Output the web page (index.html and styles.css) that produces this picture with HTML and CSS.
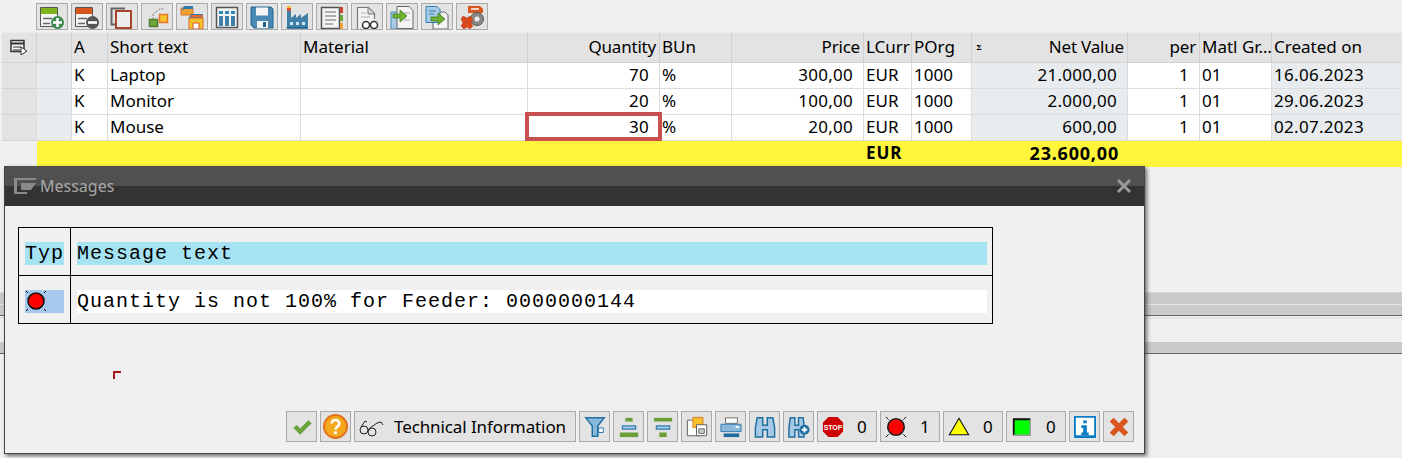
FILE: index.html
```html
<!DOCTYPE html>
<html lang="en">
<head>
<meta charset="utf-8">
<title>Messages</title>
<link rel="stylesheet" href="styles.css">
</head>
<body>
<div class="page">
  <div class="toolbar">
    <button class="tb"><svg class="ic" viewBox="0 0 24 24"><path d="M.5 2.500h17v19H.5z" fill="#f4f4f4" stroke="#555"/><path d="M1 3h16v6H1z" fill="#7fb41b"/><path d="M3 13.500h9M3 18.500h7" stroke="#666" stroke-width="1.500"/><circle cx="17.500" cy="17.500" r="6.500" fill="#3d8a4e"/><path d="M17.500 13v9M13 17.500h9" stroke="#fff" stroke-width="2.600"/></svg></button>
    <button class="tb"><svg class="ic" viewBox="0 0 24 24"><path d="M.5 2.500h17v19H.5z" fill="#f4f4f4" stroke="#555"/><path d="M1 3h16v6H1z" fill="#d8561c"/><path d="M3 13.500h9M3 18.500h7" stroke="#666" stroke-width="1.500"/><circle cx="17.500" cy="17.500" r="6.500" fill="#555"/><path d="M13 17.500h9" stroke="#fff" stroke-width="2.600"/></svg></button>
    <button class="tb"><svg class="ic" viewBox="0 0 24 24"><path d="M15 3.500H1.500v16H5" fill="none" stroke="#666" stroke-width="2"/><path d="M6 6h15v17H6z" fill="#eee" stroke="#a8452c" stroke-width="2"/></svg></button>
    <button class="tb"><svg class="ic" viewBox="0 0 24 24"><path d="M8 14V9l7-5h4" fill="none" stroke="#888" stroke-dasharray="2 1"/><path d="M4.500 14.500h8v7h-8z" fill="#6fa83a" stroke="#4d7f2c" stroke-width="1.500"/><path d="M14.500 9.500h8v8h-8z" fill="#f9c52c" stroke="#e8762a" stroke-width="1.500"/></svg></button>
    <button class="tb"><svg class="ic" viewBox="0 0 24 24"><path d="M1 3h12v7H1z" fill="#f0a030" stroke="#d8762a"/><path d="M1 6l3-5h9v3H4z" fill="#2f7cb0"/><path d="M8 14l3-5h12v4H8z" fill="#2f7cb0"/><path d="M9 13h14v11H9z" fill="#f6c02c" stroke="#e0662a"/><path d="M13 18h6v6h-6z" fill="#fff" stroke="#d8562a"/><path d="M11 11h12" stroke="#e0662a" stroke-width="2"/></svg></button>
    <button class="tb"><svg class="ic" viewBox="0 0 24 24"><path d="M1.500 2.500h21v20h-21z" fill="#f4f4f4" stroke="#555" stroke-width="1.500"/><path d="M4 6h4v3H4zM10 6h4v3h-4zM16 6h4v3h-4z" fill="#2f86b8"/><path d="M4 11h4v10H4zM10 11h4v10h-4zM16 11h4v10h-4z" fill="#3f7fa8"/></svg></button>
    <button class="tb"><svg class="ic" viewBox="0 0 24 24"><path d="M1 2h20l2 2v19H4l-3-3z" fill="#4b89b5" stroke="#1f6590" stroke-width="1"/><path d="M6 2.500h12v8H6z" fill="#f4f4f4"/><path d="M7 16h11v7H7z" fill="#f4f4f4"/><path d="M13 17h3v5h-3z" fill="#1f6590"/></svg></button>
    <button class="tb"><svg class="ic" viewBox="0 0 24 24"><path d="M2 1h4v12l5-4v4l5-4v4l7-5v16H2z" fill="#3f7fa8"/><path d="M2 3h4v3H2z" fill="#e04a30"/><path d="M2 1h4v2H2z" fill="#f2c030"/><path d="M5 17h3v3H5zM11 17h3v3h-3zM17 17h3v3h-3z" fill="#cfe5f2"/><path d="M1.500 22.500h21" stroke="#1f6590"/></svg></button>
    <button class="tb"><svg class="ic" viewBox="0 0 24 24"><path d="M1.500 2.500h18v21h-18z" fill="#f4f4f4" stroke="#555" stroke-width="1.500"/><path d="M5 7h11M5 11h11M5 15h11M5 19h8" stroke="#999" stroke-width="1.500"/><path d="M20 2h3v6h-3z" fill="#d04030"/><path d="M20 10h3v6h-3z" fill="#6fa83a"/><path d="M20 18h3v6h-3z" fill="#f0a030"/></svg></button>
    <button class="tb"><svg class="ic" viewBox="0 0 24 24"><path d="M2.500 24V2.500h11l6 6V14" fill="#f4f4f4" stroke="#777" stroke-width="1.200"/><path d="M13 3v6h6" fill="#ddd" stroke="#777"/><path d="M6 8h5M6 12h9" stroke="#aaa"/><circle cx="11" cy="20" r="3.500" fill="#fff" stroke="#333" stroke-width="1.500"/><circle cx="19" cy="20" r="3.500" fill="#fff" stroke="#333" stroke-width="1.500"/><path d="M14 19h2" stroke="#333" stroke-width="1.500"/></svg></button>
    <button class="tb"><svg class="ic" viewBox="0 0 24 24"><path d="M1 7h8v17H1z" fill="#a8cce6" stroke="#4b89b5"/><path d="M7 1.500h12l4 4v18H7z" fill="#f4f4f4" stroke="#666"/><path d="M14 8h6M14 15h6" stroke="#aaa"/><path d="M3 9h7V5l7 6-7 6v-4H3z" fill="#6fb02c" stroke="#3f7f2c" stroke-width=".8"/></svg></button>
    <button class="tb"><svg class="ic" viewBox="0 0 24 24"><path d="M11 7h9l3 3v14H8V10z" fill="#f4f4f4" stroke="#666"/><path d="M1 1.500h11l3 3v13H1z" fill="#a8cce6" stroke="#2f7cb0"/><path d="M4 6h7M4 9h5" stroke="#2f7cb0"/><path d="M6 12h7V8l7 6-7 6v-4H6z" fill="#6fb02c" stroke="#3f7f2c" stroke-width=".8"/></svg></button>
    <button class="tb"><svg class="ic" viewBox="0 0 24 24"><path d="M8 1h12l3 3v4H8z" fill="#d8561c"/><path d="M11 4h8" stroke="#fff" stroke-width="1.500"/><circle cx="17" cy="14" r="6.500" fill="#888" stroke="#555"/><circle cx="17" cy="14" r="2.500" fill="#eee"/><path d="M3 11l4 2 3-2 3 3-2 4 2 3-3 3-3-2-3 2-3-3 2-3-2-4z" fill="#d8481c" stroke="#b83818" stroke-width=".5"/></svg></button>
  </div>

  <div class="grid-table">
    <div class="row head">
      <div class="c sel"><svg class="sel-ic" viewBox="0 0 18 16"><path d="M1 1.500h13v11H1z" fill="#f4f4f4" stroke="#333" stroke-width="1.500"/><path d="M1 4.500h13" stroke="#333" stroke-width="2"/><path d="M3 8h8M3 11h7" stroke="#333"/><path d="M11 8l6 4-6 4z" fill="#fff" stroke="#333"/></svg></div>
      <div class="c"></div><div class="c">A</div><div class="c">Short text</div><div class="c">Material</div>
      <div class="c r">Quantity</div><div class="c">BUn</div><div class="c r">Price</div><div class="c">LCurr</div><div class="c">POrg</div>
      <div class="c r sum"><span class="sigma">Σ</span>Net Value</div><div class="c r">per</div><div class="c">Matl Gr…</div><div class="c">Created on</div>
    </div>
    <div class="row">
      <div class="c sel"></div><div class="c shade"></div><div class="c">K</div><div class="c">Laptop</div><div class="c"></div>
      <div class="c n">70</div><div class="c">%</div><div class="c n">300,00</div><div class="c">EUR</div><div class="c">1000</div>
      <div class="c n shade">21.000,00</div><div class="c n">1</div><div class="c">01</div><div class="c shade date">16.06.2023</div>
    </div>
    <div class="row">
      <div class="c sel"></div><div class="c shade"></div><div class="c">K</div><div class="c">Monitor</div><div class="c"></div>
      <div class="c n">20</div><div class="c">%</div><div class="c n">100,00</div><div class="c">EUR</div><div class="c">1000</div>
      <div class="c n shade">2.000,00</div><div class="c n">1</div><div class="c">01</div><div class="c shade date">29.06.2023</div>
    </div>
    <div class="row">
      <div class="c sel"></div><div class="c shade"></div><div class="c">K</div><div class="c">Mouse</div><div class="c"></div>
      <div class="c n current">30<span class="focus"></span></div><div class="c">%</div><div class="c n">20,00</div><div class="c">EUR</div><div class="c">1000</div>
      <div class="c n shade">600,00</div><div class="c n">1</div><div class="c">01</div><div class="c shade date">02.07.2023</div>
    </div>
    <div class="row total">
      <div class="c sel"></div><div class="c y first"></div><div class="c y"></div><div class="c y"></div><div class="c y"></div>
      <div class="c y"></div><div class="c y"></div><div class="c y"></div><div class="c y b cur">EUR</div><div class="c y"></div>
      <div class="c y b tot">23.600,00</div><div class="c y"></div><div class="c y"></div><div class="c y"></div>
    </div>
  </div>

  <div class="splitter"><div class="band"></div><div class="band"></div></div>
  <div class="stripe"></div>
  <div class="subbar"></div>
</div>

<section class="dialog">
  <header class="titlebar">
    <svg class="title-ic" viewBox="0 0 22 16"><path d="M0 0h22v2H0zM0 2h3v14H0zM3 14h10v2H3z" fill="#8a8a8a"/><path d="M7 5h15l-5 7H7z" fill="#8a8a8a"/></svg>
    <span class="title">Messages</span>
    <svg class="close" viewBox="0 0 16 16"><path d="M2 2l12 12M14 2L2 14" stroke="#9a9a9a" stroke-width="3"/></svg>
  </header>
  <div class="body">
    <div class="msg">
      <div class="mrow">
        <div class="mc typ"><span class="hl">Typ</span></div>
        <div class="mc txt"><span class="hl">Message text</span></div>
      </div>
      <div class="mrow last">
        <div class="mc typ"><span class="hl lamp"><svg class="lamp-ic" viewBox="0 0 22 22"><path d="M1 1l2 2M21 1l-2 2M1 21l2-2M21 21l-2-2" stroke="#000"/><circle cx="11" cy="11" r="8" fill="#f00" stroke="#111" stroke-width="1.600"/></svg></span></div>
        <div class="mc txt"><span class="hl white">Quantity is not 100% for Feeder: 0000000144</span></div>
      </div>
    </div>
    <svg class="corner" viewBox="0 0 8 8"><path d="M0 0h8v2H2v6H0z" fill="#a01818"/></svg>
  </div>
  <footer class="actions">
    <button class="ab"><svg class="ai" viewBox="0 0 24 24"><path d="M3 13l3-3 4 4 9-9 3 3-12 12z" fill="#6aa53a" stroke="#4f8a2c" stroke-width=".6"/></svg></button>
    <button class="ab"><svg class="ai big" viewBox="0 0 26 26"><circle cx="13" cy="13" r="12" fill="#f6a81c" stroke="#e2701c" stroke-width="2"/><path d="M9 10c0-5 8-5 8 0 0 3-4 3-4 6" fill="none" stroke="#fff" stroke-width="2.800"/><path d="M11.500 18h3v3h-3z" fill="#fff"/></svg></button>
    <button class="ab wide"><svg class="ai tech" viewBox="0 0 26 20"><circle cx="6" cy="13" r="4" fill="none" stroke="#222"/><circle cx="14" cy="15" r="4" fill="none" stroke="#222"/><path d="M10 12l2 1M3 10l4-6 2 1M12 11l7-5 4-1 2 3" fill="none" stroke="#222"/></svg><span class="tech-label">Technical Information</span></button>
    <button class="ab"><svg class="ai" viewBox="0 0 24 24"><path d="M2 2h20l-7 9v11H9V11z" fill="#8ab8da" stroke="#1f6ea0" stroke-width="1.600"/><path d="M16 13h5v5h-5z" fill="#fff" stroke="#1f6ea0"/></svg></button>
    <button class="ab"><svg class="ai" viewBox="0 0 24 24"><path d="M8 2h8v4H8z" fill="#6c9e3a"/><path d="M4.800 10.800h14.400v3.400H4.800z" fill="#a8cce6" stroke="#2f7cb0" stroke-width="1.400"/><path d="M2 18h20v5H2z" fill="#6c9e3a"/></svg></button>
    <button class="ab"><svg class="ai" viewBox="0 0 24 24"><path d="M2 2h20v4H2z" fill="#6c9e3a"/><path d="M4.800 10.800h14.400v3.400H4.800z" fill="#a8cce6" stroke="#2f7cb0" stroke-width="1.400"/><path d="M8 18h8v5H8z" fill="#6c9e3a"/></svg></button>
    <button class="ab"><svg class="ai" viewBox="0 0 24 24"><path d="M1.500 4.500h14v17h-14z" fill="#fff" stroke="#555"/><path d="M7.500 1.500h11v11h-11z" fill="#f6c02c" stroke="#e0761c"/><path d="M11.500 9.500h11v12h-11z" fill="#fff" stroke="#555"/><path d="M14 14h6v5h-6z" fill="#ccc" stroke="#666"/></svg></button>
    <button class="ab"><svg class="ai" viewBox="0 0 24 24"><path d="M6 2h13v6H6z" fill="#fff" stroke="#666"/><path d="M1 9h22v8H1z" fill="#8ab8da" stroke="#2f7cb0"/><path d="M17 11h4v2h-4z" fill="#fff"/><path d="M4 19h17v4H4z" fill="#1f6ea0"/></svg></button>
    <button class="ab"><svg class="ai" viewBox="0 0 24 24"><path d="M3.500 2h6v8h5V2h6l2 11v10h-8v-8h-5v8H1.500V13z" fill="#a5c8e4" stroke="#1f6ea0" stroke-width="1.600"/></svg></button>
    <button class="ab"><svg class="ai" viewBox="0 0 24 24"><path d="M2.500 2h5v8h4V2h5l1 8v13h-6v-8h-4v8H1V13z" fill="#a5c8e4" stroke="#1f6ea0" stroke-width="1.600"/><circle cx="18" cy="15" r="5.500" fill="#1f6ea0"/><path d="M18 12v6M15 15h6" stroke="#fff" stroke-width="2"/></svg></button>
    <button class="ab cnt"><svg class="ai" viewBox="0 0 24 24"><path d="M7 1h10l6 6v10l-6 6H7l-6-6V7z" fill="#cc0000"/><text x="12" y="15" class="stop">STOP</text></svg><span class="num">0</span></button>
    <button class="ab cnt"><svg class="ai" viewBox="0 0 24 24"><path d="M1 1l3 3M23 1l-3 3M1 23l3-3M23 23l-3-3" stroke="#000"/><circle cx="12" cy="12" r="9" fill="#f00" stroke="#222" stroke-width="1.800"/></svg><span class="num">1</span></button>
    <button class="ab cnt"><svg class="ai" viewBox="0 0 24 24"><path d="M12 2.500l10.500 18H1.500z" fill="#ff0" stroke="#111" stroke-width="1.200"/></svg><span class="num">0</span></button>
    <button class="ab cnt"><svg class="ai" viewBox="0 0 24 24"><path d="M3 3h18v18H3z" fill="#0f0"/><path d="M3 21V3.500h18" fill="none" stroke="#111" stroke-width="2"/><path d="M3 21h18V4" fill="none" stroke="#999" stroke-width="1.500"/></svg><span class="num">0</span></button>
    <button class="ab"><svg class="ai" viewBox="0 0 24 24"><path d="M1 1h22v22H1z" fill="#fff" stroke="#0a7cc4" stroke-width="2"/><path d="M10 5h4v3h-4zM8 10h6v8h2v3H8v-3h2v-5H8z" fill="#0a7cc4"/><path d="M1 21h22v2H1z" fill="#0a7cc4"/></svg></button>
    <button class="ab"><svg class="ai" viewBox="0 0 24 24"><path d="M4 4l16 16M20 4L4 20" stroke="#d9561e" stroke-width="6"/></svg></button>
  </footer>
</section>
</body>
</html>
```

FILE: styles.css
```css
* { box-sizing: border-box; }
html, body { margin: 0; height: 100%; }
body {
  background: #f0f0f0;
  overflow: hidden;
  font-family: "Noto Sans", "Liberation Sans", sans-serif;
  font-size: 17px;
  color: #000;
  position: relative;
  width: 1402px;
  height: 458px;
}
button { font: inherit; color: inherit; padding: 0; margin: 0; }
.toolbar {
  height: 32px;
  display: flex;
  gap: 3px;
  padding: 3px 0 0 36px;
}
.tb {
  width: 32px;
  height: 27px;
  background: #e3e3e3;
  border: 1px solid #aaa;
  border-radius: 0;
  display: flex;
  align-items: center;
  justify-content: center;
}
.ic { width: 24px; height: 24px; display: block; }

.row {
  display: grid;
  grid-template-columns: 36px 35px 36px 193px 227px 132px 72px 132px 48px 60px 156px 72px 72px 131px;
  height: 26px;
}
.row.head { height: 31px; }
.c {
  background: #fff;
  border-left: 1px solid #dcdcdc;
  border-bottom: 1px solid #dcdcdc;
  padding: 0 3px 0 2px;
  line-height: 23px;
  white-space: nowrap;
  overflow: hidden;
}
.head .c {
  background: #e3e3e3;
  border-left: 1px solid #d2d2d2;
  border-bottom: 1px solid #d2d2d2;
  border-top: 1px solid #ececec;
  line-height: 28px;
}
.c.r { text-align: right; letter-spacing: -.2px; }
.c.n { text-align: right; padding-right: 10px; letter-spacing: .25px; }
.c.date { letter-spacing: .3px; }
.c.shade { background: #e8ecef; }
.c.sel, .head .c.sel {
  background: #e3e3e3;
  margin-left: 2px;
  padding: 0;
  border-left: 0;
  border-bottom: 1px solid #d2d2d2;
}
.sel-ic { width: 18px; height: 16px; display: block; margin: 6px 0 0 8px; }
.sigma { font-family: "DejaVu Serif", serif; font-size: 8px; font-weight: 700; float: left; margin-left: 2px; }
.c.current { overflow: visible; position: relative; }
.focus {
  position: absolute;
  left: -3px; right: -3px; top: -3px; bottom: -1px;
  border: 4px solid #c85050;
}
.total .c { border: 0; line-height: 24px; }
.total .c.sel { background: #f0f0f0; }
.total .c.first { margin-left: 1px; }
.c.y { background: #fff53a; }
.c.b { font-weight: 700; }
.c.cur { padding-left: 3px; letter-spacing: 1px; }
.c.tot { text-align: right; padding-right: 8px; font-size: 18px; letter-spacing: .8px; }

.splitter { margin-top: 125px; }
.band { height: 12px; background: #cacaca; border-top: 1px solid #d8d8d8; }
.band + .band { border-top: 1px solid #e4e4e4; border-bottom: 1px solid #666; height: 12px; }
.stripe { height: 2px; margin-top: 1px; background: #e4e4e4; }
.subbar { margin-top: 23px; height: 12px; background: #cacaca; border-bottom: 1px solid #666; }

.dialog {
  position: absolute;
  left: 4px; top: 166px;
  width: 1141px; height: 288px;
  background: #f0f0f0;
  border: 1px solid #444;
  border-top: 0;
  box-shadow: 2px 2px 4px rgba(0,0,0,.55);
  display: flex;
  flex-direction: column;
}
.titlebar {
  height: 40px;
  flex: none;
  background: linear-gradient(#505050 0, #505050 50%, #333 50%, #333 100%);
  display: flex;
  align-items: center;
  padding: 0 12px 0 9px;
  color: #a8a8a8;
  font-size: 16px;
}
.title-ic { width: 22px; height: 16px; display: block; margin-right: 4px; }
.title { flex: 1; }
.close { width: 16px; height: 16px; display: block; }
.body { flex: 1; padding: 21px 0 0 13px; position: relative; }
.msg { width: 975px; border: 1px solid #000; }
.mrow { display: flex; height: 48px; border-bottom: 1px solid #000; }
.mrow.last { border-bottom: 0; height: 47px; }
.mc { display: flex; align-items: center; padding-top: 4px; font-family: "Liberation Mono", monospace; font-size: 20px; letter-spacing: 1px; }
.mc.typ { width: 52px; flex: none; border-right: 1px solid #000; padding-left: 6px; }
.mc.txt { flex: 1; padding-left: 6px; padding-right: 5px; }
.hl { background: #a5e3f3; height: 23px; line-height: 23px; display: block; flex: 1; white-space: pre; }
.typ .hl { margin-right: 6px; }
.hl.lamp { background: #a5c8ec; }
.hl.white { background: #fff; }
.lamp-ic { width: 22px; height: 22px; display: block; }
.corner { position: absolute; left: 108px; top: 165px; width: 8px; height: 8px; }
.actions {
  flex: none;
  display: flex;
  justify-content: flex-end;
  gap: 3px;
  padding: 0 10px 11px 0;
}
.ab {
  min-width: 31px;
  height: 31px;
  background: #e3e3e3;
  border: 1px solid #aaa;
  border-radius: 0;
  display: flex;
  align-items: center;
  justify-content: center;
  white-space: nowrap;
}
.ai { width: 22px; height: 22px; display: block; flex: none; }
.ai.big { width: 25px; height: 25px; }
.ai.tech { width: 26px; height: 20px; }
.ab.wide { width: 222px; justify-content: flex-start; padding-left: 3px; }
.tech-label { margin-left: 10px; letter-spacing: -.1px; }
.ab.cnt { width: 60px; justify-content: flex-start; padding-left: 4px; }
.num { margin-left: 13px; }
.stop { font-family: "Liberation Sans", sans-serif; font-size: 7.500px; font-weight: 700; fill: #fff; text-anchor: middle; }
```
